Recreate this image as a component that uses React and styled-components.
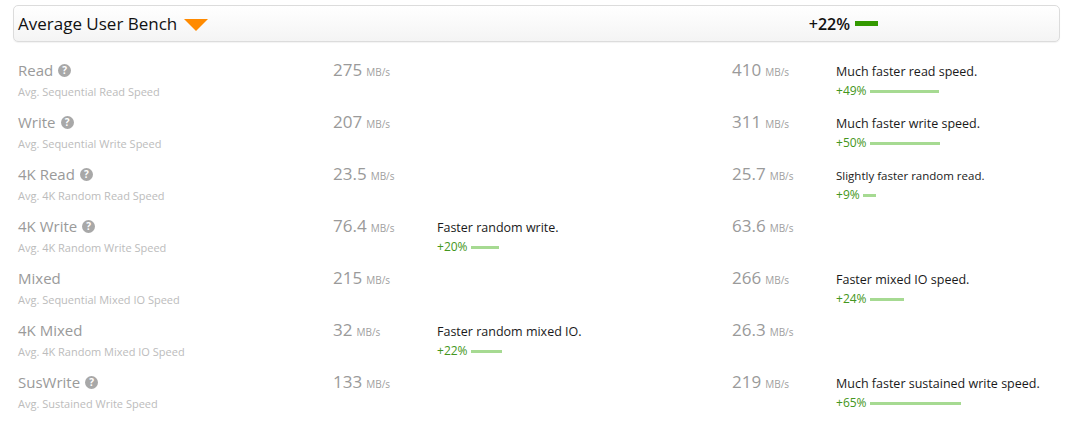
import React from "react";
import styled, { createGlobalStyle } from "styled-components";

const GlobalStyle = createGlobalStyle`
  body {
    margin: 0;
    background: #fff;
    font-family: "Open Sans", "Liberation Sans", sans-serif;
  }
`;

const Page = styled.div`
  width: 1068px;
  padding: 5px 8px 0 13px;
  box-sizing: border-box;
`;

const Header = styled.div`
  display: flex;
  align-items: center;
  height: 37px;
  box-sizing: border-box;
  padding: 0 181px 0 4px;
  border: 1px solid #dcdcdc;
  border-radius: 5px;
  background: linear-gradient(#ffffff, #f4f4f4);
  box-shadow: 0 1px 1px rgba(0, 0, 0, 0.05);
`;

const Title = styled.div`
  font-size: 17px;
  color: #111;
  display: flex;
  align-items: center;
  gap: 7px;
  flex: 1;
`;

const Caret = styled.span`
  width: 0;
  height: 0;
  border-left: 12px solid transparent;
  border-right: 12px solid transparent;
  border-top: 12px solid #ff8a00;
  margin-top: 2px;
`;

const Score = styled.div`
  display: flex;
  align-items: center;
  gap: 5px;
  font-size: 16px;
  font-weight: 600;
  color: #111;
`;

const ScoreBar = styled.span`
  width: 23px;
  height: 5px;
  background: #339900;
`;

const Table = styled.div`
  padding: 17px 0 0 5px;
`;

const Row = styled.div`
  display: grid;
  grid-template-columns: 315px 104px 295px 104px 1fr;
  height: 52px;
`;

const Label = styled.div`
  display: flex;
  flex-direction: column;
`;

const Name = styled.div`
  display: flex;
  align-items: center;
  gap: 5px;
  font-size: 15px;
  line-height: 22px;
  color: #9a9a9a;
`;

const Help = styled.span`
  width: 13px;
  height: 13px;
  border-radius: 50%;
  background: #a8a8a8;
  color: #fff;
  font-size: 10px;
  font-weight: 700;
  line-height: 13px;
  text-align: center;
`;

const Sub = styled.div`
  font-size: 11px;
  line-height: 22px;
  color: #bcbcbc;
`;

const Value = styled.div`
  font-size: 17px;
  line-height: 22px;
  color: #9a9a9a;
  span {
    font-size: 10px;
    margin-left: 4px;
    color: #a0a0a0;
  }
`;

const Note = styled.div`
  display: flex;
  flex-direction: column;
  padding-top: 4px;
`;

const NoteText = styled.div`
  line-height: 18px;
  color: #1a1a1a;
  font-size: ${(p) => (p.small ? "11.5px" : "12.5px")};
`;

const Delta = styled.div`
  display: flex;
  align-items: center;
  gap: 3px;
  font-size: 12px;
  line-height: 20px;
  color: #449620;
`;

const Bar = styled.span`
  height: 3px;
  background: #a6da92;
`;

const rows = [
  { name: "Read", help: true, sub: "Avg. Sequential Read Speed", a: "275", b: "410", side: "b", note: "Much faster read speed.", pct: 49 },
  { name: "Write", help: true, sub: "Avg. Sequential Write Speed", a: "207", b: "311", side: "b", note: "Much faster write speed.", pct: 50 },
  { name: "4K Read", help: true, sub: "Avg. 4K Random Read Speed", a: "23.5", b: "25.7", side: "b", note: "Slightly faster random read.", pct: 9, small: true },
  { name: "4K Write", help: true, sub: "Avg. 4K Random Write Speed", a: "76.4", b: "63.6", side: "a", note: "Faster random write.", pct: 20 },
  { name: "Mixed", help: false, sub: "Avg. Sequential Mixed IO Speed", a: "215", b: "266", side: "b", note: "Faster mixed IO speed.", pct: 24 },
  { name: "4K Mixed", help: false, sub: "Avg. 4K Random Mixed IO Speed", a: "32", b: "26.3", side: "a", note: "Faster random mixed IO.", pct: 22 },
  { name: "SusWrite", help: true, sub: "Avg. Sustained Write Speed", a: "133", b: "219", side: "b", note: "Much faster sustained write speed.", pct: 65 },
];

function NoteCell({ row }) {
  return (
    <Note>
      <NoteText small={row.small}>{row.note}</NoteText>
      <Delta>
        +{row.pct}%
        <Bar style={{ width: Math.round(row.pct * 1.4) }} />
      </Delta>
    </Note>
  );
}

export default function App() {
  return (
    <Page>
      <GlobalStyle />
      <Header>
        <Title>
          Average User Bench <Caret />
        </Title>
        <Score>
          +22% <ScoreBar />
        </Score>
      </Header>
      <Table>
        {rows.map((r) => (
          <Row key={r.name}>
            <Label>
              <Name>
                {r.name}
                {r.help && <Help>?</Help>}
              </Name>
              <Sub>{r.sub}</Sub>
            </Label>
            <Value>
              {r.a}
              <span>MB/s</span>
            </Value>
            <div>{r.side === "a" && <NoteCell row={r} />}</div>
            <Value>
              {r.b}
              <span>MB/s</span>
            </Value>
            <div>{r.side === "b" && <NoteCell row={r} />}</div>
          </Row>
        ))}
      </Table>
    </Page>
  );
}
